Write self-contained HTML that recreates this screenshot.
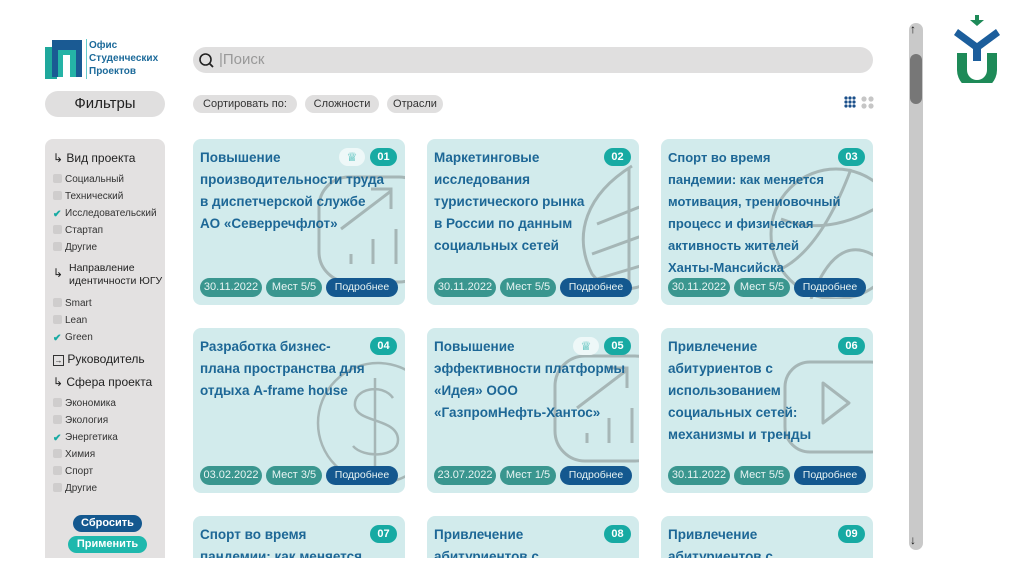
<!DOCTYPE html>
<html><head><meta charset="utf-8">
<style>
*{margin:0;padding:0;box-sizing:border-box}
body{width:1024px;height:574px;overflow:hidden;background:#fff;font-family:"Liberation Sans","Noto Sans CJK SC",sans-serif;position:relative}
.a{position:absolute}
.card{position:absolute;width:212px;background:#d2ebec;border-radius:8px;overflow:hidden}
.t{position:absolute;left:7px;top:8px;font-size:13.5px;font-weight:bold;color:#1d6796;line-height:22px;white-space:nowrap;z-index:2}
.n{position:absolute;right:8px;top:9px;width:27px;height:18px;border-radius:9px;background:#17aaa3;color:#fff;font-size:11px;font-weight:bold;text-align:center;line-height:18px;z-index:2}
.cr{position:absolute;right:40px;top:9px;width:26px;height:18px;border-radius:9px;background:#eef8f8;z-index:2;color:#17aaa3;font-size:12px;text-align:center;line-height:18px}
.p{position:absolute;top:139px;height:19px;border-radius:10px;color:#e8f4f3;font-size:11px;text-align:center;line-height:19px;z-index:2}
.d{background:#3a968f;left:7px;width:62px}
.m{background:#3a968f;left:73px;width:56px}
.b{background:#14588f;left:133px;width:72px;font-size:10.5px}
.wm{position:absolute;z-index:1;opacity:.35}
.cb{display:inline-block;width:9px;height:9px;background:#cfcdcd;border-radius:2px;margin-right:3px;vertical-align:-1px;position:relative}
.side div{font-size:10px;color:#333;height:17px;line-height:17px}
.hd{font-size:12px!important;color:#222!important}
</style></head><body>
<!-- logo -->
<div class="a" style="left:45px;top:47px;width:12px;height:32px;background:#1fa89c"></div>
<div class="a" style="left:52px;top:40px;width:30px;height:37px;background:#1a5a93"></div>
<div class="a" style="left:58px;top:50px;width:18px;height:27px;background:#25b3a6"></div>
<div class="a" style="left:63px;top:55px;width:7px;height:22px;background:#fff"></div>
<div class="a" style="left:86px;top:39px;width:1px;height:40px;background:#6cc"></div>
<div class="a" style="left:89px;top:39px;font-size:10px;font-weight:bold;color:#1c6a9a;line-height:13px">Офис<br>Студенческих<br>Проектов</div>
<!-- search -->
<div class="a" style="left:193px;top:47px;width:680px;height:26px;background:#e0dfdf;border-radius:13px"></div>
<svg class="a" style="left:198px;top:52px" width="18" height="18"><circle cx="7.5" cy="7.5" r="5.5" fill="none" stroke="#222" stroke-width="1.6"/><line x1="11.5" y1="11.5" x2="15" y2="15" stroke="#222" stroke-width="1.8"/></svg>
<div class="a" style="left:219px;top:51px;font-size:15px;color:#999">|Поиск</div>
<!-- filters -->
<div class="a" style="left:45px;top:91px;width:120px;height:26px;background:#e0dfdf;border-radius:13px;text-align:center;line-height:26px;font-size:15px;color:#222">Фильтры</div>
<div class="a" style="left:193px;top:95px;width:104px;height:18px;background:#e0dfdf;border-radius:9px;text-align:center;line-height:18px;font-size:11px;color:#333">Сортировать по:</div>
<div class="a" style="left:305px;top:95px;width:74px;height:18px;background:#e0dfdf;border-radius:9px;text-align:center;line-height:18px;font-size:11px;color:#333">Сложности</div>
<div class="a" style="left:387px;top:95px;width:56px;height:18px;background:#e0dfdf;border-radius:9px;text-align:center;line-height:18px;font-size:11px;color:#333">Отрасли</div>
<svg class="a" style="left:844px;top:96px" width="32" height="14"><g fill="#1a4f8a"><circle cx="2" cy="2" r="1.6"/><circle cx="6" cy="2" r="1.6"/><circle cx="10" cy="2" r="1.6"/><circle cx="2" cy="6" r="1.6"/><circle cx="6" cy="6" r="1.6"/><circle cx="10" cy="6" r="1.6"/><circle cx="2" cy="10" r="1.6"/><circle cx="6" cy="10" r="1.6"/><circle cx="10" cy="10" r="1.6"/></g><g fill="#c6c6c6"><circle cx="20" cy="3" r="2.6"/><circle cx="27" cy="3" r="2.6"/><circle cx="20" cy="10" r="2.6"/><circle cx="27" cy="10" r="2.6"/></g></svg>
<!-- side panel -->
<div class="a side" style="left:45px;top:139px;width:120px;height:419px;background:#e3e1e1;border-radius:8px 8px 0 0;padding:11px 0 0 8px">
<div class="hd" style="height:21px!important">↳ Вид проекта</div>
<div><span class="cb"></span>Социальный</div>
<div><span class="cb"></span>Технический</div>
<div><span class="cb" style="background:none;color:#17aaa3;font-weight:bold;font-size:10px;line-height:9px">✔</span>Исследовательский</div>
<div><span class="cb"></span>Стартап</div>
<div><span class="cb"></span>Другие</div>
<div class="hd" style="height:39px!important;line-height:13px!important;padding-top:6px;font-size:10.5px!important;position:relative;padding-left:16px">Направление идентичности ЮГУ<span style="position:absolute;left:0;top:11px;font-size:12px">↳</span></div>
<div><span class="cb"></span>Smart</div>
<div><span class="cb"></span>Lean</div>
<div><span class="cb" style="background:none;color:#17aaa3;font-weight:bold;font-size:10px;line-height:9px">✔</span>Green</div>
<div class="hd" style="height:24px!important;line-height:26px!important"><span style="display:inline-block;width:11px;height:11px;border:1px solid #333;font-size:8px;line-height:9px;text-align:center;vertical-align:0">→</span> Руководитель</div>
<div class="hd" style="height:25px!important;line-height:24px!important">↳ Сфера проекта</div>
<div><span class="cb"></span>Экономика</div>
<div><span class="cb"></span>Экология</div>
<div><span class="cb" style="background:none;color:#17aaa3;font-weight:bold;font-size:10px;line-height:9px">✔</span>Энергетика</div>
<div><span class="cb"></span>Химия</div>
<div><span class="cb"></span>Спорт</div>
<div><span class="cb"></span>Другие</div>
</div>
<div class="a" style="left:73px;top:515px;width:69px;height:17px;border-radius:9px;background:#14588f;color:#fff;font-size:11px;font-weight:bold;text-align:center;line-height:17px">Сбросить</div>
<div class="a" style="left:68px;top:536px;width:79px;height:17px;border-radius:9px;background:#1fb8ad;color:#fff;font-size:11px;font-weight:bold;text-align:center;line-height:17px">Применить</div>

<!-- row 1 -->
<div class="card" style="left:193px;top:139px;height:166px">
<svg class="wm" style="left:118px;top:30px" width="100" height="120"><rect x="8" y="8" width="110" height="105" rx="30" fill="none" stroke="#555" stroke-width="3"/><path d="M30 60 L80 22 M60 20 H80 V40" fill="none" stroke="#555" stroke-width="3"/><path d="M40 85v10M62 70v25M85 60v35" stroke="#555" stroke-width="3"/></svg>
<div class="t">Повышение<br>производительности труда<br>в диспетчерской службе<br>АО «Северречфлот»</div><div class="cr">♕</div><div class="n">01</div>
<div class="p d">30.11.2022</div><div class="p m">Мест 5/5</div><div class="p b">Подробнее</div></div>
<div class="card" style="left:427px;top:139px;height:166px">
<svg class="wm" style="left:140px;top:25px" width="80" height="130"><path d="M65 2 C20 30 5 70 25 110 C40 130 75 130 90 110" fill="none" stroke="#555" stroke-width="3"/><path d="M62 5 L62 125 M30 60 L80 40 M25 90 L80 70 M30 115 L80 100" fill="none" stroke="#555" stroke-width="3"/></svg>
<div class="t">Маркетинговые<br>исследования<br>туристического рынка<br>в России по данным<br>социальных сетей</div><div class="n">02</div>
<div class="p d">30.11.2022</div><div class="p m">Мест 5/5</div><div class="p b">Подробнее</div></div>
<div class="card" style="left:661px;top:139px;height:166px">
<svg class="wm" style="left:100px;top:20px" width="120" height="140"><circle cx="75" cy="75" r="65" fill="none" stroke="#555" stroke-width="3"/><path d="M20 60 Q70 80 130 40 M50 140 Q80 60 130 110 M20 110 Q60 90 90 10" fill="none" stroke="#555" stroke-width="3"/></svg>
<div class="t" style="font-size:13px">Спорт во время<br>пандемии: как меняется<br>мотивация, трениовочный<br>процесс и физическая<br>активность жителей<br>Ханты-Мансийска</div><div class="n">03</div>
<div class="p d">30.11.2022</div><div class="p m">Мест 5/5</div><div class="p b">Подробнее</div></div>
<!-- row 2 -->
<div class="card" style="left:193px;top:328px;height:165px">
<svg class="wm" style="left:120px;top:30px" width="100" height="130"><circle cx="65" cy="65" r="60" fill="none" stroke="#555" stroke-width="2.5"/><path d="M80 40 C70 25 40 30 42 48 C44 65 85 60 85 82 C85 100 50 100 40 88 M62 20 V110" fill="none" stroke="#555" stroke-width="2.5"/></svg>
<div class="t">Разработка бизнес-<br>плана пространства для<br>отдыха A-frame house</div><div class="n">04</div>
<div class="p d" style="top:138px">03.02.2022</div><div class="p m" style="top:138px">Мест 3/5</div><div class="p b" style="top:138px">Подробнее</div></div>
<div class="card" style="left:427px;top:328px;height:165px">
<svg class="wm" style="left:120px;top:20px" width="100" height="120"><rect x="8" y="8" width="110" height="105" rx="30" fill="none" stroke="#555" stroke-width="3"/><path d="M30 60 L80 22 M60 20 H80 V40" fill="none" stroke="#555" stroke-width="3"/><path d="M40 85v10M62 70v25M85 60v35" stroke="#555" stroke-width="3"/></svg>
<div class="t">Повышение<br>эффективности платформы<br>«Идея» ООО<br>«ГазпромНефть-Хантос»</div><div class="cr">♕</div><div class="n">05</div>
<div class="p d" style="top:138px">23.07.2022</div><div class="p m" style="top:138px">Мест 1/5</div><div class="p b" style="top:138px">Подробнее</div></div>
<div class="card" style="left:661px;top:328px;height:165px">
<svg class="wm" style="left:120px;top:30px" width="100" height="110"><rect x="4" y="4" width="110" height="90" rx="25" fill="none" stroke="#555" stroke-width="3"/><path d="M42 25 L68 45 L42 65 Z" fill="none" stroke="#555" stroke-width="3" stroke-linejoin="round"/></svg>
<div class="t">Привлечение<br>абитуриентов с<br>использованием<br>социальных сетей:<br>механизмы и тренды</div><div class="n">06</div>
<div class="p d" style="top:138px">30.11.2022</div><div class="p m" style="top:138px">Мест 5/5</div><div class="p b" style="top:138px">Подробнее</div></div>
<!-- row 3 -->
<div class="card" style="left:193px;top:516px;height:42px;border-radius:8px 8px 0 0">
<div class="t">Спорт во время<br>пандемии: как меняется</div><div class="n">07</div></div>
<div class="card" style="left:427px;top:516px;height:42px;border-radius:8px 8px 0 0">
<div class="t">Привлечение<br>абитуриентов с</div><div class="n">08</div></div>
<div class="card" style="left:661px;top:516px;height:42px;border-radius:8px 8px 0 0">
<div class="t">Привлечение<br>абитуриентов с</div><div class="n">09</div></div>
<div class="a" style="left:0;top:558px;width:1024px;height:16px;background:#fff"></div>
<!-- scrollbar -->
<div class="a" style="left:909px;top:23px;width:14px;height:527px;background:#c9c9c9;border-radius:7px"></div>
<div class="a" style="left:910px;top:54px;width:12px;height:50px;background:#777;border-radius:6px"></div>
<div class="a" style="left:910px;top:22px;font-size:12px;color:#111">↑</div>
<div class="a" style="left:910px;top:533px;font-size:12px;color:#111">↓</div>
<!-- university logo -->
<svg class="a" style="left:954px;top:13px" width="46" height="70"><path d="M21 2h4v5h5l-7 6-7-6h5z" fill="#1e8a58"/><path d="M4 16l19 14 19-14 4 6-19 14v12h-8V36L0 22z" fill="#1c5e9c"/><path d="M3 40h10v17a10 10 0 0 0 20 0V40h10v17a20 20 0 0 1-40 0z" fill="#1e8a58"/></svg>
</body></html>
